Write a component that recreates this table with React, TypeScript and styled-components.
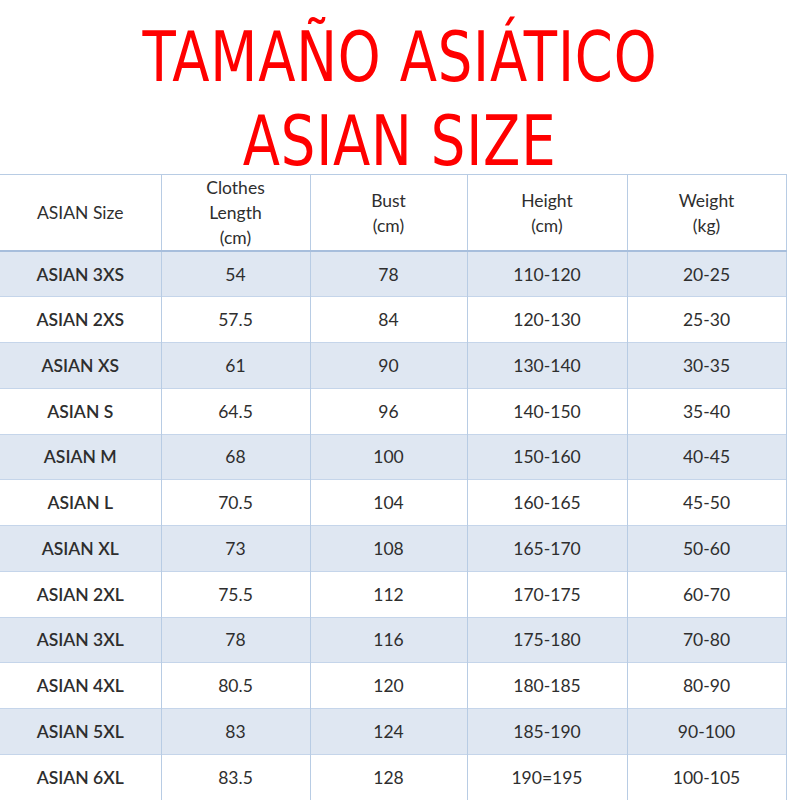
import React from 'react';
import styled, {createGlobalStyle} from 'styled-components';

const GlobalStyle = createGlobalStyle`
  html, body {
    margin: 0;
    padding: 0;
    background: #ffffff;
  }
  body {
    width: 800px;
    height: 800px;
    overflow: hidden;
  }
`

type SizeRow = {
    size: string
    length: string
    bust: string
    height: string
    weight: string
}

const rows: SizeRow[] = [
    {size: 'ASIAN 3XS', length: '54', bust: '78', height: '110-120', weight: '20-25'},
    {size: 'ASIAN 2XS', length: '57.5', bust: '84', height: '120-130', weight: '25-30'},
    {size: 'ASIAN XS', length: '61', bust: '90', height: '130-140', weight: '30-35'},
    {size: 'ASIAN S', length: '64.5', bust: '96', height: '140-150', weight: '35-40'},
    {size: 'ASIAN M', length: '68', bust: '100', height: '150-160', weight: '40-45'},
    {size: 'ASIAN L', length: '70.5', bust: '104', height: '160-165', weight: '45-50'},
    {size: 'ASIAN XL', length: '73', bust: '108', height: '165-170', weight: '50-60'},
    {size: 'ASIAN 2XL', length: '75.5', bust: '112', height: '170-175', weight: '60-70'},
    {size: 'ASIAN 3XL', length: '78', bust: '116', height: '175-180', weight: '70-80'},
    {size: 'ASIAN 4XL', length: '80.5', bust: '120', height: '180-185', weight: '80-90'},
    {size: 'ASIAN 5XL', length: '83', bust: '124', height: '185-190', weight: '90-100'},
    {size: 'ASIAN 6XL', length: '83.5', bust: '128', height: '190=195', weight: '100-105'},
]

const App = () => {
    return (
        <Page>
            <GlobalStyle/>
            <Title>
                <TitleLine>TAMAÑO ASIÁTICO</TitleLine>
                <TitleLine>ASIAN SIZE</TitleLine>
            </Title>
            <SizeTable>
                <colgroup>
                    <col style={{width: 161}}/>
                    <col style={{width: 149}}/>
                    <col style={{width: 157}}/>
                    <col style={{width: 160}}/>
                    <col style={{width: 159}}/>
                </colgroup>
                <thead>
                <HeaderRow>
                    <HeaderCell>ASIAN Size</HeaderCell>
                    <HeaderCell>Clothes<br/>Length<br/>(cm)</HeaderCell>
                    <HeaderCell>Bust<br/>(cm)</HeaderCell>
                    <HeaderCell>Height<br/>(cm)</HeaderCell>
                    <HeaderCell>Weight<br/>(kg)</HeaderCell>
                </HeaderRow>
                </thead>
                <tbody>
                {rows.map((row, i) => (
                    <BodyRow key={row.size} $shaded={i % 2 === 0}>
                        <SizeCell>{row.size}</SizeCell>
                        <Cell>{row.length}</Cell>
                        <Cell>{row.bust}</Cell>
                        <Cell>{row.height}</Cell>
                        <Cell>{row.weight}</Cell>
                    </BodyRow>
                ))}
                </tbody>
            </SizeTable>
        </Page>
    );
};

const Page = styled.div`
  width: 800px;
  height: 800px;
  overflow: hidden;
  background: #ffffff;
`

const Title = styled.div`
  display: flex;
  flex-direction: column;
  align-items: center;
  gap: 18px;
  padding-top: 24px;
  height: 150px;
  color: #ff0000;
  font-family: "DejaVu Sans", sans-serif;
  font-size: 69px;
  line-height: 66px;
`

const TitleLine = styled.div`
  white-space: nowrap;
  letter-spacing: 1px;
  transform: scaleX(0.79);
`

const SizeTable = styled.table`
  border-collapse: collapse;
  table-layout: fixed;
  width: 786px;
  font-family: Lato, "Open Sans", sans-serif;
  font-size: 17.5px;
  color: #2e2e2e;
`

const HeaderRow = styled.tr`
  height: 76px;
  background: #ffffff;
  border-top: 1px solid #b8cce4;
  border-bottom: 2px solid #a7bedc;
`

const HeaderCell = styled.th`
  font-weight: 400;
  line-height: 25px;
  text-align: center;
  vertical-align: middle;
  padding: 0;
  border-right: 1px solid #b8cce4;
`

const BodyRow = styled.tr<{ $shaded: boolean }>`
  height: 45.75px;
  background: ${p => p.$shaded ? '#dfe7f2' : '#ffffff'};
  border-bottom: 1px solid #c5d5ea;
`

const Cell = styled.td`
  padding: 0;
  text-align: center;
  vertical-align: middle;
  border-right: 1px solid #b8cce4;
`

const SizeCell = styled(Cell)`
  font-weight: 600;
`

export default App;
